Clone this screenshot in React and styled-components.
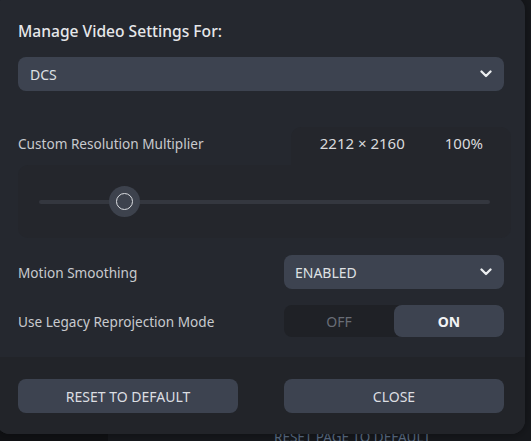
import React from "react";
import styled, { createGlobalStyle } from "styled-components";

const Global = createGlobalStyle`
  html, body { margin: 0; padding: 0; background: #16181c; overflow: hidden; }
  * { box-sizing: border-box; }
  #root { width: 531px; height: 441px; }
`;

const Page = styled.div`
  position: relative;
  width: 531px;
  height: 441px;
  display: flex;
  overflow: hidden;
  font-family: "Noto Sans", "Open Sans", sans-serif;
`;

const Sidebar = styled.div`
  width: 108px;
  background: #111215;
`;

const Behind = styled.div`
  flex: 1;
  background: #17191d;
  padding: 428px 0 0 166px;
`;

const BehindText = styled.div`
  font-size: 13.5px;
  line-height: 18px;
  color: #5c6e86;
  white-space: nowrap;
`;

const Modal = styled.div`
  position: absolute;
  left: -4px;
  top: -4px;
  width: 529px;
  height: 438px;
  border-radius: 14px;
  background: #25282f;
  overflow: hidden;
  display: flex;
  flex-direction: column;
  box-shadow: 0 0 12px rgba(0, 0, 0, 0.4);
`;

const Body = styled.div`
  padding: 24px 21px 0 22px;
  display: flex;
  flex-direction: column;
`;

const Title = styled.h2`
  margin: 0;
  font-size: 15.6px;
  line-height: 22px;
  font-weight: 500;
  color: #e6e7ea;
`;

const Select = styled.div`
  height: 34px;
  margin-top: ${(p) => p.$mt || 0}px;
  background: #3d4350;
  border-radius: 8px;
  display: flex;
  align-items: center;
  justify-content: space-between;
  padding: 0 12px 0 ${(p) => p.$pl || 12}px;
  font-size: 14px;
  color: #dfe1e4;
`;

const Chevron = () => (
  <svg width="12" height="8" viewBox="0 0 12 8">
    <polyline
      points="1.5,1.5 6,6 10.5,1.5"
      fill="none"
      stroke="#eceef0"
      strokeWidth="2.3"
      strokeLinecap="round"
      strokeLinejoin="round"
    />
  </svg>
);

const ResSection = styled.div`
  margin-top: 36px;
  margin-right: -7px;
  display: flex;
  flex-direction: column;
`;

const HeaderRow = styled.div`
  height: 38px;
  display: flex;
  align-items: stretch;
`;

const Label = styled.div`
  font-size: 13.6px;
  color: #c8cace;
  display: flex;
  align-items: center;
  padding-bottom: ${(p) => p.$pb || 0}px;
  white-space: nowrap;
`;

const LabelCell = styled(Label)`
  flex: 1;
`;

const ValueBox = styled.div`
  width: 220px;
  background: #24262c;
  border-radius: 10px 10px 0 0;
  display: flex;
  align-items: center;
  justify-content: flex-end;
  gap: 40px;
  padding: 0 28px 6px 0;
  font-size: 15px;
  color: #d9dadd;
`;

const SliderBox = styled.div`
  height: 73px;
  background: #24262c;
  border-radius: 10px 0 10px 10px;
  padding: 0 21px;
  display: flex;
  align-items: center;
`;

const Track = styled.div`
  position: relative;
  flex: 1;
  height: 4px;
  border-radius: 2px;
  background: #34373f;
`;

const Thumb = styled.div`
  position: absolute;
  top: 50%;
  width: 31px;
  height: 31px;
  margin: -15.5px 0 0 -15.5px;
  border-radius: 50%;
  background: #3d424d;
  display: flex;
  align-items: center;
  justify-content: center;
  &::after {
    content: "";
    width: 15px;
    height: 15px;
    border-radius: 50%;
    border: 1.5px solid #dcdee2;
  }
`;

const Row = styled.div`
  margin-top: ${(p) => p.$mt}px;
  display: grid;
  grid-template-columns: 1fr 220px;
  align-items: center;
`;

const Toggle = styled.div`
  height: 32px;
  border-radius: 8px;
  background: #1f2126;
  display: grid;
  grid-template-columns: 1fr 1fr;
`;

const ToggleOpt = styled.div`
  display: flex;
  align-items: center;
  justify-content: center;
  border-radius: 8px;
  font-size: 14px;
  font-weight: ${(p) => (p.$on ? 700 : 400)};
  color: ${(p) => (p.$on ? "#f2f3f5" : "#696d76")};
  background: ${(p) => (p.$on ? "#3d4350" : "transparent")};
`;

const Footer = styled.div`
  margin-top: 20px;
  flex: 1;
  background: #222429;
  padding: 22px 21px 0 22px;
  display: flex;
  justify-content: space-between;
  align-items: flex-start;
`;

const Button = styled.button`
  width: 220px;
  height: 34px;
  border: none;
  border-radius: 8px;
  background: #3d4350;
  color: #dcdee2;
  font-family: inherit;
  font-size: 14px;
  padding: 0;
  cursor: pointer;
`;

export default function App() {
  const pct = 19;
  return (
    <>
      <Global />
      <Page>
        <Sidebar />
        <Behind>
          <BehindText>RESET PAGE TO DEFAULT</BehindText>
        </Behind>
        <Modal>
          <Body>
            <Title>Manage Video Settings For:</Title>
            <Select $mt={15}>
              <span>DCS</span>
              <Chevron />
            </Select>
            <ResSection>
              <HeaderRow>
                <LabelCell $pb={6}>Custom Resolution Multiplier</LabelCell>
                <ValueBox>
                  <span>2212 × 2160</span>
                  <span>100%</span>
                </ValueBox>
              </HeaderRow>
              <SliderBox>
                <Track>
                  <Thumb style={{ left: `${pct}%` }} />
                </Track>
              </SliderBox>
            </ResSection>
            <Row $mt={17}>
              <Label>Motion Smoothing</Label>
              <Select $pl={11}>
                <span>ENABLED</span>
                <Chevron />
              </Select>
            </Row>
            <Row $mt={16}>
              <Label>Use Legacy Reprojection Mode</Label>
              <Toggle>
                <ToggleOpt>OFF</ToggleOpt>
                <ToggleOpt $on>ON</ToggleOpt>
              </Toggle>
            </Row>
          </Body>
          <Footer>
            <Button>RESET TO DEFAULT</Button>
            <Button>CLOSE</Button>
          </Footer>
        </Modal>
      </Page>
    </>
  );
}
